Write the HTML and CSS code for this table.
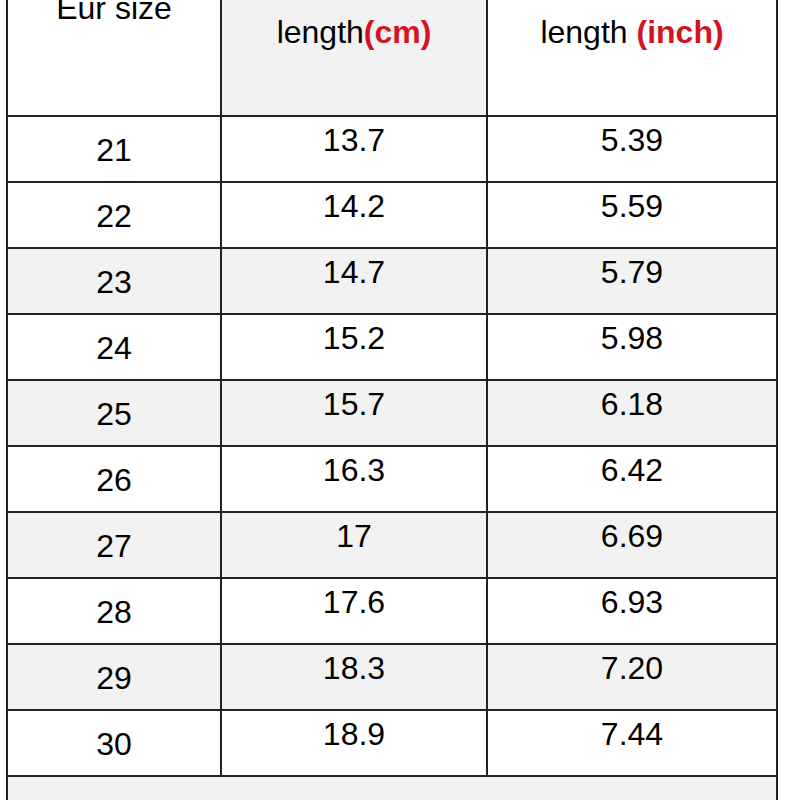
FILE: index.html
```html
<!DOCTYPE html>
<html lang="en">
<head>
<meta charset="utf-8">
<title>Size chart</title>
<link rel="stylesheet" href="styles.css">
</head>
<body>
<div class="sheet">
  <div class="row head">
    <div class="cell c1"><span class="h1">Eur size</span></div>
    <div class="cell c2 shade"><span class="h2">length<b class="unit">(cm)</b></span></div>
    <div class="cell c3"><span class="top-line">Insoles</span><span class="h3">length <b class="unit">(inch)</b></span></div>
  </div>
  <div class="row"><div class="cell c1">21</div><div class="cell c2">13.7</div><div class="cell c3">5.39</div></div>
  <div class="row"><div class="cell c1">22</div><div class="cell c2">14.2</div><div class="cell c3">5.59</div></div>
  <div class="row alt"><div class="cell c1">23</div><div class="cell c2">14.7</div><div class="cell c3">5.79</div></div>
  <div class="row"><div class="cell c1">24</div><div class="cell c2">15.2</div><div class="cell c3">5.98</div></div>
  <div class="row alt"><div class="cell c1">25</div><div class="cell c2">15.7</div><div class="cell c3">6.18</div></div>
  <div class="row"><div class="cell c1">26</div><div class="cell c2">16.3</div><div class="cell c3">6.42</div></div>
  <div class="row alt"><div class="cell c1">27</div><div class="cell c2">17</div><div class="cell c3">6.69</div></div>
  <div class="row"><div class="cell c1">28</div><div class="cell c2">17.6</div><div class="cell c3">6.93</div></div>
  <div class="row alt"><div class="cell c1">29</div><div class="cell c2">18.3</div><div class="cell c3">7.20</div></div>
  <div class="row"><div class="cell c1">30</div><div class="cell c2">18.9</div><div class="cell c3">7.44</div></div>
  <div class="foot"></div>
</div>
</body>
</html>
```

FILE: styles.css
```css
html, body {
  margin: 0;
  padding: 0;
  background: #ffffff;
  overflow: hidden;
}

body {
  font-family: "Liberation Sans", Arial, sans-serif;
  color: #000000;
  font-size: 32px;
}

.sheet {
  width: 772px;
  margin: -42px 0 0 6px;
  box-sizing: border-box;
  border: 2px solid #222222;
  border-bottom: none;
}

.row {
  display: grid;
  grid-template-columns: 214px 266px 288px;
  height: 66px;
  box-sizing: border-box;
  border-bottom: 2px solid #222222;
}

.row.alt {
  background: #f2f2f2;
}

.cell {
  box-sizing: border-box;
  text-align: center;
  line-height: 32px;
  padding-top: 7px;
}

.cell.c1,
.cell.c2 {
  border-right: 2px solid #222222;
}

.cell.c1 {
  padding-top: 17px;
}

.row.head {
  height: 157px;
}

.row.head .cell {
  line-height: 41px;
  padding-top: 0;
}

.row.head .c1 {
  padding-top: 28px;
}

.row.head .c2 {
  padding-top: 52px;
}

.row.head .c3 {
  padding-top: 8px;
}

.top-line {
  display: block;
  margin-bottom: 3px;
}

.shade {
  background: #f2f2f2;
}

.unit {
  color: #d3141e;
  font-weight: bold;
}

.foot {
  height: 60px;
  background: #f2f2f2;
}
```
